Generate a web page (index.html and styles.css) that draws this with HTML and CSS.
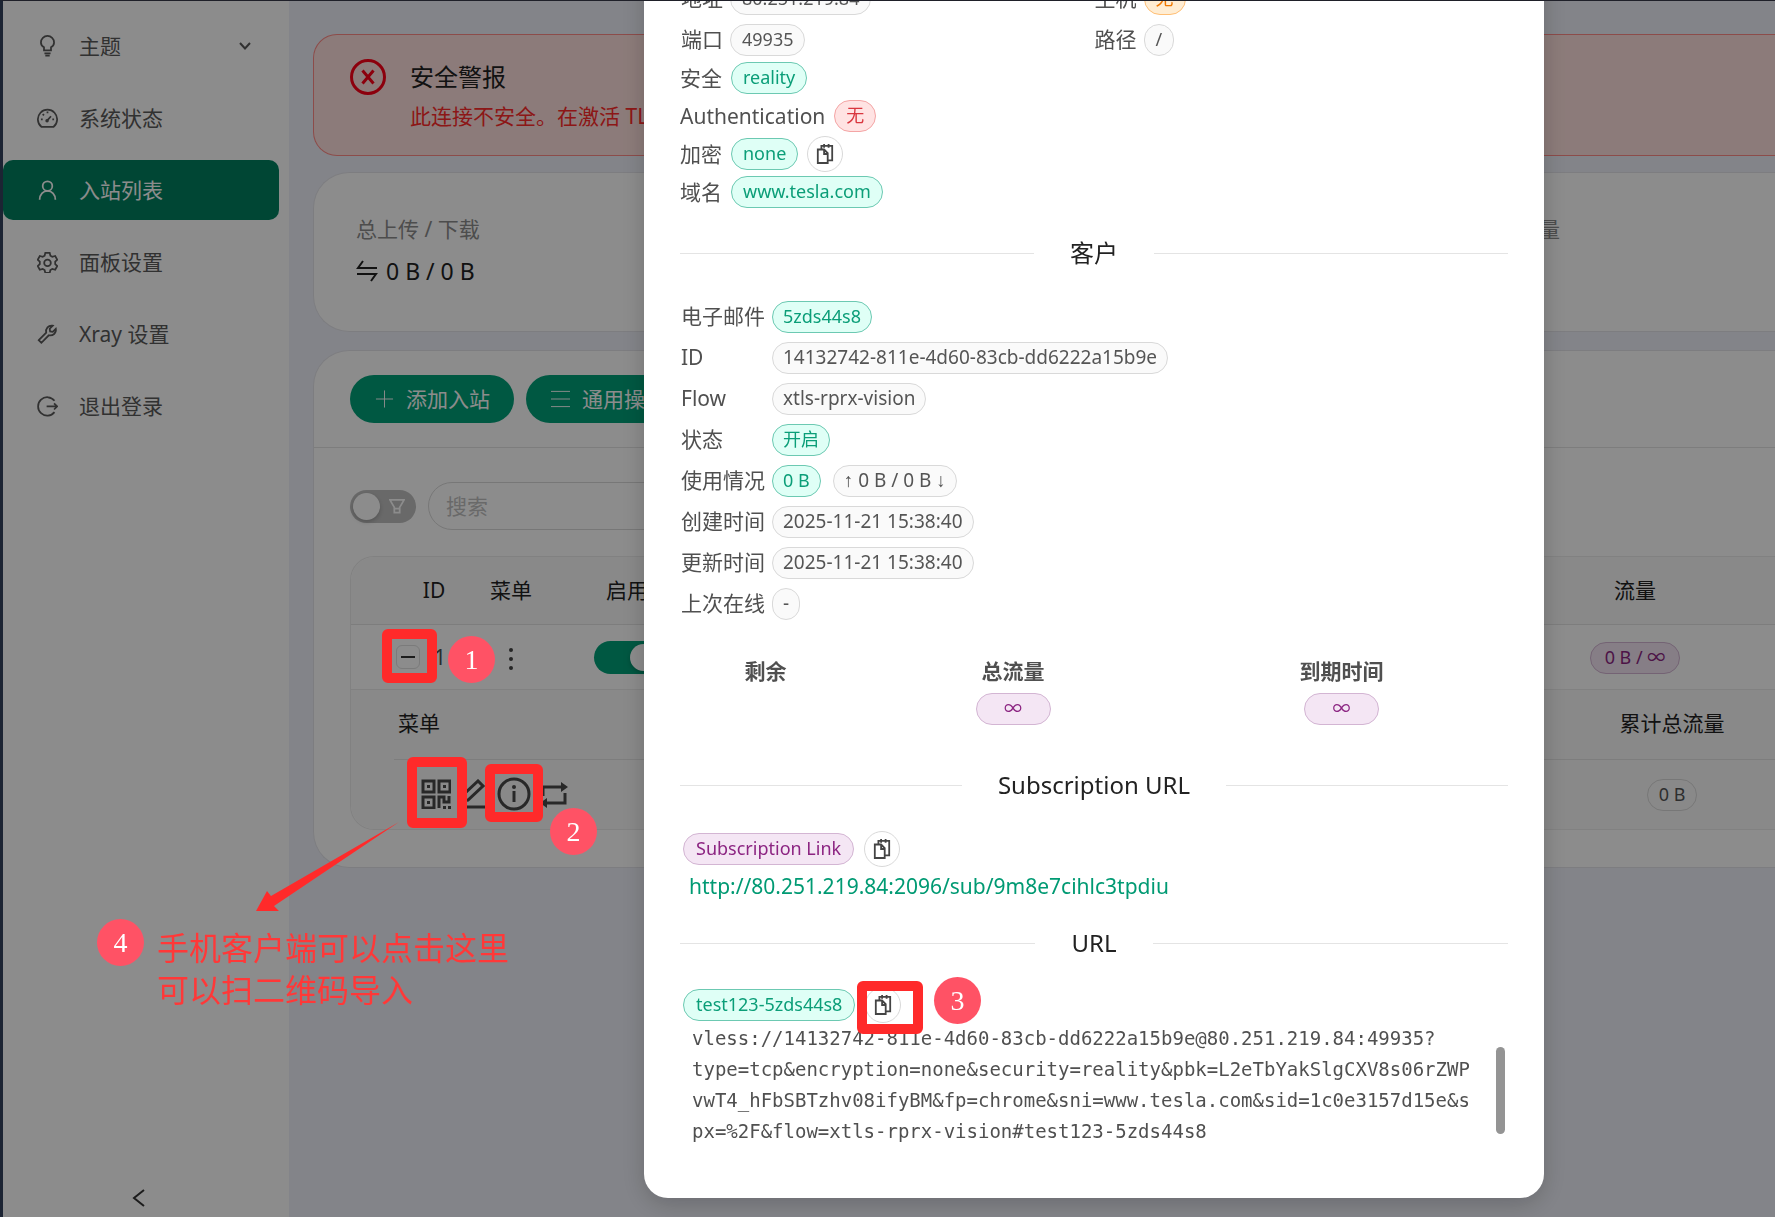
FILE: index.html
```html
<!DOCTYPE html>
<html lang="zh-CN">
  <head>
    <meta charset="utf-8">
    <title>入站列表</title>
    <link rel="stylesheet" href="styles.css">
  </head>
  <body>
    <svg class="defs">
      <symbol id="copy" viewBox="0 0 20 24">
        <path d="M2 7h7l4 4v11H2z M9 7v5h4 M6 7V3h12v16h-5 M9 1v4 M14 1v4"/>
      </symbol>
    </svg>

    <div class="layout">
      <aside class="sider">
        <nav class="menu">
          <a href="#" class="menu-item">
            <svg class="icon" viewBox="0 0 24 24"><path d="M8 17v-3.500C5.500 12 4.500 10 4.500 8a7.500 7.500 0 0 1 15 0c0 2-1 4-3.500 5.500V17z M8.500 20.500h7 M9.500 23h5"/></svg>
            <span>主题</span>
            <svg class="arrow" viewBox="0 0 12 8"><path d="M1 1l5 5.500L11 1"/></svg>
          </a>
          <a href="#" class="menu-item">
            <svg class="icon" viewBox="0 0 24 24"><path d="M5 22a11 11 0 1 1 14 0z M11.500 15L16 10 M12 4.500v2 M4.500 13.500h2 M17.500 13.500h2 M6.500 7.500L8 9"/><circle cx="11.500" cy="15" r="1"/></svg>
            <span>系统状态</span>
          </a>
          <a href="#" class="menu-item active">
            <svg class="icon" viewBox="0 0 24 24"><circle cx="12" cy="7.500" r="5.500"/><path d="M3 23c0-6 4-10 9-10s9 4 9 10"/></svg>
            <span>入站列表</span>
          </a>
          <a href="#" class="menu-item">
            <svg class="icon" viewBox="0 0 24 24"><path d="M9.500 1.500h5l.8 3.300 2.200 1.300 3.300-1 2.400 4.300-2.400 2.300v2.600l2.400 2.300-2.400 4.300-3.300-1-2.200 1.300-.8 3.300h-5l-.8-3.300-2.200-1.300-3.300 1L.8 16.600l2.400-2.300v-2.600L.8 9.400l2.400-4.300 3.300 1 2.200-1.300z"/><circle cx="12" cy="13" r="3.800"/></svg>
            <span>面板设置</span>
          </a>
          <a href="#" class="menu-item">
            <svg class="icon" viewBox="0 0 24 24"><path d="M2 19l8.500-8.500C9.500 6 13 1.500 18 2.500l-3.500 3.500.5 3 3 .5L21.500 6c1 5-3.500 8.500-8 7.500L5 22z"/></svg>
            <span>Xray 设置</span>
          </a>
          <a href="#" class="menu-item">
            <svg class="icon" viewBox="0 0 24 24"><path d="M20 6a10.500 10.500 0 1 0 0 13 M11 12.500h12 M19.500 9l3.500 3.500-3.500 3.500"/></svg>
            <span>退出登录</span>
          </a>
        </nav>
        <button class="trigger" aria-label="收起">
          <svg viewBox="0 0 14 20"><path d="M12 2L2 10l10 8"/></svg>
        </button>
      </aside>

      <main class="content">
        <section class="alert">
          <svg class="alert-icon" viewBox="0 0 36 36"><circle cx="18" cy="18" r="16.500"/><path d="M12.500 11.500l11 13 M23.500 11.500l-11 13"/></svg>
          <div>
            <h2>安全警报</h2>
            <p>此连接不安全。在激活 TLS 进行数据保护之前，请勿输入敏感信息。</p>
          </div>
        </section>

        <section class="card stats">
          <div class="stat">
            <div class="stat-title">总上传 / 下载</div>
            <div class="stat-value">
              <svg viewBox="0 0 22 24"><path d="M7 2L2 9h19 M1 15h19l-5 7"/></svg>
              0 B / 0 B
            </div>
          </div>
          <div class="stat">
            <div class="stat-title">总用量</div>
          </div>
        </section>

        <section class="card">
          <div class="card-head">
            <button class="btn">
              <svg viewBox="0 0 20 20"><path d="M10 1v18 M1 10h18"/></svg>添加入站
            </button>
            <button class="btn">
              <svg viewBox="0 0 20 20"><path d="M0 2h20 M0 10h20 M0 18h20"/></svg>通用操作
            </button>
          </div>
          <div class="card-body">
            <div class="filter">
              <label class="switch">
                <input type="checkbox" aria-label="筛选">
                <svg viewBox="0 0 18 18"><path d="M1 1.500h16L12 10v6H6v-6z M6 11.500h6"/></svg>
              </label>
              <input type="text" class="search" placeholder="搜索" aria-label="搜索">
            </div>

            <table class="inbounds">
              <colgroup>
                <col class="c-gap"><col class="c-id"><col class="c-menu"><col class="c-on"><col><col class="c-traffic"><col class="c-end">
              </colgroup>
              <tr>
                <th></th><th>ID</th><th>菜单</th><th>启用</th><th></th><th>流量</th><th></th>
              </tr>
              <tr class="row">
                <td></td>
                <td>
                  <div class="id-cell"><button class="expand" aria-label="收起行"></button>1</div>
                </td>
                <td><svg class="more" viewBox="0 0 6 24"><circle cx="3" cy="3" r="2"/><circle cx="3" cy="12" r="2"/><circle cx="3" cy="21" r="2"/></svg></td>
                <td><label class="switch on"><input type="checkbox" checked aria-label="启用"></label></td>
                <td></td>
                <td><span class="tag purple total">0 B / ∞</span></td>
                <td></td>
              </tr>
              <tr class="nested">
                <td></td>
                <td colspan="6">
                  <table class="clients">
                    <colgroup><col class="c-ops"><col><col class="c-total"></colgroup>
                    <tr><th>菜单</th><th></th><th>累计总流量</th></tr>
                    <tr>
                      <td>
                        <div class="ops">
                          <svg viewBox="0 0 30 30"><path d="M2 2h11v11H2z M18 2h11v11H18z M2 18h11v11H2z M18 29V18h5v5h5v-6"/><path class="dot" d="M6 6h3v3H6z M22 6h3v3h-3z M6 22h3v3H6z M22 27h3v3h-3z M27 27h3v3h-3z"/></svg>
                          <svg viewBox="0 0 30 30"><path d="M3 22l1-6L19 2l5 5L9 21z M2 28h26"/></svg>
                          <svg class="info" viewBox="0 0 34 34"><circle cx="17" cy="17" r="15"/><path d="M17 14v11"/><circle class="dot" cx="17" cy="10" r="2"/></svg>
                          <svg viewBox="0 0 30 30"><path d="M4 17V8h20 M26 14v10H6"/><path class="dot" d="M22 3l7 5-7 5z M8 19l-7 5 7 5z"/></svg>
                        </div>
                      </td>
                      <td></td>
                      <td><span class="tag">0 B</span></td>
                    </tr>
                  </table>
                </td>
              </tr>
            </table>
          </div>
        </section>
      </main>
    </div>

    <div class="mask">
      <div class="modal">
        <div class="info-cols">
          <table class="pairs">
            <tr><td>地址</td><td><span class="tag">80.251.219.84</span></td></tr>
            <tr><td>端口</td><td><span class="tag">49935</span></td></tr>
          </table>
          <table class="pairs">
            <tr><td>主机</td><td><span class="tag orange">无</span></td></tr>
            <tr><td>路径</td><td><span class="tag">/</span></td></tr>
          </table>
        </div>
        <ul class="security">
          <li>安全 <span class="tag green">reality</span></li>
          <li>Authentication <span class="tag red">无</span></li>
          <li>加密 <span class="tag green">none</span><button class="copy" aria-label="复制"><svg><use href="#copy"/></svg></button></li>
          <li>域名 <span class="tag green">www.tesla.com</span></li>
        </ul>

        <h3 class="divider">客户</h3>
        <table class="client">
          <tr><td>电子邮件</td><td><span class="tag green">5zds44s8</span></td></tr>
          <tr><td>ID</td><td><span class="tag">14132742-811e-4d60-83cb-dd6222a15b9e</span></td></tr>
          <tr><td>Flow</td><td><span class="tag">xtls-rprx-vision</span></td></tr>
          <tr><td>状态</td><td><span class="tag green">开启</span></td></tr>
          <tr><td>使用情况</td><td><span class="tag green">0 B</span><span class="tag usage"><i>↑</i> 0 B / 0 B <i>↓</i></span></td></tr>
          <tr><td>创建时间</td><td><span class="tag">2025-11-21 15:38:40</span></td></tr>
          <tr><td>更新时间</td><td><span class="tag">2025-11-21 15:38:40</span></td></tr>
          <tr><td>上次在线</td><td><span class="tag">-</span></td></tr>
        </table>
        <table class="quota">
          <colgroup><col class="c-left"><col class="c-sum"><col></colgroup>
          <tr><th>剩余</th><th>总流量</th><th>到期时间</th></tr>
          <tr><td></td><td><span class="tag purple wide">∞</span></td><td><span class="tag purple wide">∞</span></td></tr>
        </table>

        <h3 class="divider">Subscription URL</h3>
        <div class="link-head">
          <span class="tag purple">Subscription Link</span>
          <button class="copy" aria-label="复制"><svg><use href="#copy"/></svg></button>
        </div>
        <a class="sub-link" href="#">http://80.251.219.84:2096/sub/9m8e7cihlc3tpdiu</a>

        <h3 class="divider">URL</h3>
        <div class="link-head">
          <span class="tag green">test123-5zds44s8</span>
          <button class="copy" aria-label="复制"><svg><use href="#copy"/></svg></button>
        </div>
        <div class="code-box">
          <code>vless://14132742-811e-4d60-83cb-dd6222a15b9e@80.251.219.84:49935?<br>type=tcp&amp;encryption=none&amp;security=reality&amp;pbk=L2eTbYakSlgCXV8s06rZWP<br>vwT4_hFbSBTzhv08ifyBM&amp;fp=chrome&amp;sni=www.tesla.com&amp;sid=1c0e3157d15e&amp;s<br>px=%2F&amp;flow=xtls-rprx-vision#test123-5zds44s8</code>
          <span class="thumb"></span>
        </div>
      </div>
    </div>

    <!-- tutorial marks -->
    <div class="marks">
      <div class="box box-expand"></div>
      <div class="box box-qr"></div>
      <div class="box box-info"></div>
      <div class="box box-copy"></div>
      <div class="num num-1">1</div>
      <div class="num num-2">2</div>
      <div class="num num-3">3</div>
      <div class="num num-4">4</div>
      <svg class="pointer" viewBox="0 0 143 90"><path d="M0 89L11 69l4 5L143 0 18 84l5 5z"/></svg>
      <p class="note">手机客户端可以点击这里<br>可以扫二维码导入</p>
    </div>
  </body>
</html>
```
FILE: styles.css
```css
* { box-sizing: border-box; }
body {
  margin: 0;
  height: 100vh;
  overflow: hidden;
  background: #eff1fa;
  color: #505050;
  font: 21px/32px "Noto Sans", "Noto Sans CJK SC", sans-serif;
}
/* dark edge of the browser window */
body::before {
  content: "";
  position: fixed;
  inset: 0;
  border-top: 1px solid #1f2029;
  border-left: 3px solid #1c2433;
  z-index: 10;
  pointer-events: none;
}
h2, h3, p, ul { margin: 0; padding: 0; font-weight: normal; }
svg { fill: none; stroke: currentColor; stroke-width: 2; flex: none; }
button { font: inherit; cursor: pointer; }
table { border-collapse: collapse; }
td, th { padding: 0; font-weight: normal; }
.defs { position: absolute; width: 0; height: 0; }
.dot { fill: currentColor; stroke: none; }

.layout { display: flex; height: 100%; padding-left: 3px; }
.sider {
  flex: none;
  display: flex;
  flex-direction: column;
  width: 286px;
  background: #fff;
}
.menu {
  flex: 1;
  display: flex;
  flex-direction: column;
  gap: 12px;
  padding: 16px 10px 0 0;
}
.menu-item {
  display: flex;
  align-items: center;
  height: 60px;
  padding: 0 28px 0 34px;
  border-radius: 10px;
  color: #595959;
  text-decoration: none;
}
.menu-item .icon { width: 21px; height: 22px; margin-right: 21px; }
.menu-item .arrow { width: 12px; height: 8px; margin-left: auto; }
.menu-item.active { background: #008060; color: #fff; }
.trigger {
  height: 34px;
  padding: 0 14px 0 0;
  border: 0;
  background: none;
  color: #333;
}
.trigger svg { width: 14px; height: 20px; }

.content { flex: 1; min-width: 0; padding: 34px 0 0 24px; }
.alert {
  display: flex;
  gap: 24px;
  height: 122px;
  padding: 24px 0 0 36px;
  border: 1px solid #ff8a87;
  border-right: 0;
  border-radius: 24px 0 0 24px;
  background: #ffe1de;
  white-space: nowrap;
  overflow: hidden;
}
.alert-icon { width: 36px; height: 36px; color: #ff0018; stroke-width: 3; }
.alert h2 { color: #222; font-size: 24px; line-height: 36px; }
.alert p { color: #ff2a2a; line-height: 42px; }
.card {
  border: 1px solid #e4e4ea;
  border-right: 0;
  border-radius: 36px 0 0 36px;
  background: #fff;
}
.stats { display: flex; height: 160px; margin: 16px 0 18px; padding: 40px 0 0 42px; }
.stat { flex: none; width: 1141px; }
.stat:last-child { flex: 1; width: auto; min-width: 0; }
.stat-title { color: #8c8c8c; }
.stat-value {
  display: flex;
  align-items: center;
  gap: 8px;
  padding-top: 8px;
  color: #222;
  font-size: 23px;
  line-height: 36px;
}
.stat-value svg { width: 22px; height: 24px; }
.card-head { display: flex; gap: 12px; padding: 24px 36px; border-bottom: 1px solid #e4e4e4; }
.btn {
  display: flex;
  align-items: center;
  gap: 12px;
  height: 48px;
  padding: 0 24px 0 25px;
  border: 0;
  border-radius: 24px;
  background: #00a078;
  color: #fff;
  white-space: nowrap;
}
.btn svg { width: 19px; height: 20px; stroke-width: 1; }
.card-body { padding: 34px 0 37px 36px; }
.filter { display: flex; align-items: center; gap: 12px; margin-bottom: 26px; }
.switch {
  display: inline-flex;
  align-items: center;
  justify-content: space-between;
  width: 66px;
  height: 33px;
  padding: 0 11px 0 3px;
  border-radius: 17px;
  background: #bfbfbf;
  vertical-align: middle;
}
.switch input {
  appearance: none;
  width: 27px;
  height: 27px;
  margin: 0;
  border-radius: 50%;
  background: #fff;
  box-shadow: 0 2px 4px rgba(0, 0, 0, .2);
}
.switch svg { width: 16px; height: 17px; color: #fff; }
.switch.on { justify-content: flex-end; padding: 0 3px; background: #00a078; }
.search {
  width: 420px;
  height: 48px;
  padding: 0 17px;
  border: 1px solid #d9d9d9;
  border-radius: 24px;
  background: none;
  font: inherit;
}
.search::placeholder { color: #bfbfbf; }

.inbounds {
  width: 100%;
  table-layout: fixed;
  border-collapse: separate;
  border-spacing: 0;
  border: 1px solid #ececec;
  border-right: 0;
  border-radius: 24px 0 0 24px;
  text-align: center;
}
.inbounds th {
  height: 68px;
  padding-bottom: 2px;
  border-bottom: 1px solid #e4e4e4;
  background: #fafafa;
  color: #222;
  white-space: nowrap;
}
.inbounds > tbody > tr:first-child th:first-child { border-top-left-radius: 24px; }
.row > td { height: 65px; border-bottom: 1px solid #ececec; }
.nested > td { background: #fafafa; }
.nested > td:first-child { border-bottom-left-radius: 24px; }
.c-gap { width: 43px; }
.c-id { width: 80px; }
.c-menu { width: 74px; }
.c-on { width: 158px; }
.c-traffic { width: 170px; }
.c-end { width: 55px; }
.id-cell { display: flex; align-items: center; gap: 14px; padding-left: 2px; }
.expand {
  display: flex;
  align-items: center;
  justify-content: center;
  width: 24px;
  height: 24px;
  padding: 0;
  border: 1px solid #e0e0e0;
  border-radius: 6px;
  background: #fff;
}
.expand::before { content: ""; width: 14px; height: 2px; background: #333; }
.more { width: 6px; height: 24px; fill: #444; stroke: none; vertical-align: middle; }
.clients { width: 100%; table-layout: fixed; }
.clients th { height: 69px; }
.clients th:first-child { padding-left: 4px; text-align: left; }
.clients td { height: 70px; }
.c-ops { width: 200px; }
.c-total { width: 206px; }
.ops { display: flex; align-items: center; gap: 8px; padding-left: 27px; color: #4a4a4a; }
.ops svg { width: 30px; height: 30px; stroke-width: 3; }
.ops .info { width: 34px; height: 34px; }

.tag {
  display: inline-block;
  height: 32px;
  padding: 0 11px;
  border: 1px solid #d9d9d9;
  border-radius: 16px;
  background: #fafafa;
  color: #555;
  font-size: 18px;
  line-height: 29px;
  text-align: center;
  vertical-align: middle;
  white-space: nowrap;
}
.tag.green { border-color: #6cc9b2; background: #dffff6; color: #0b9e78; }
.tag.red { border-color: #f4a5a5; background: #ffe3e3; color: #d9363e; }
.tag.orange { border-color: #ffbf75; background: #ffedd3; color: #f07800; }
.tag.purple { border-color: #d3b5d3; background: #f4e6f4; color: #8c2582; }
.tag.wide { width: 75px; }
.tag.total { width: 90px; }

.mask { position: fixed; inset: 0; background: rgba(0, 0, 0, .45); }
.modal {
  width: 900px;
  margin: -59px 0 0 644px;
  padding: 36px 36px 51px;
  border-radius: 24px;
  background: #fff;
  box-shadow: 0 6px 24px rgba(0, 0, 0, .2);
}
.info-cols { display: grid; grid-template-columns: 1fr 1fr; padding-left: 1px; }
.pairs td { height: 41px; }
.pairs td:first-child { width: 49px; }
.security { list-style: none; }
.security li { display: flex; align-items: center; gap: 9px; height: 38px; }
.copy {
  display: inline-flex;
  align-items: center;
  justify-content: center;
  width: 36px;
  height: 36px;
  padding: 0;
  border: 1px solid #d9d9d9;
  border-radius: 50%;
  background: #fff;
  color: #444;
}
.copy svg { width: 18px; height: 22px; }
.divider {
  display: flex;
  align-items: center;
  gap: 36px;
  color: #222;
  font-size: 24px;
  line-height: 36px;
}
.divider::before, .divider::after { content: ""; flex: 1; height: 1px; background: #e4e4e4; }
.security + .divider { margin: 24px 0; }
.quota + .divider { margin: 38px 0 28px; }
.sub-link + .divider { margin: 20px 0 26px; }
.client { margin-left: 1px; }
.client td { height: 41px; }
.client td:first-child { width: 91px; }
.client .tag { padding: 0 10px; font-size: 19px; }
.client .tag.green { font-size: 18px; }
.client .usage { margin-left: 12px; }
.usage i { font-family: "Liberation Sans", sans-serif; font-style: normal; }
.quota { width: 100%; margin-top: 32px; table-layout: fixed; text-align: center; }
.quota th { height: 32px; font-weight: bold; }
.quota td { height: 42px; }
.c-left { width: 171px; }
.c-sum { width: 324px; }
.link-head { display: flex; align-items: center; gap: 10px; padding-left: 3px; }
.link-head .tag { padding: 0 12px; }
.sub-link {
  display: block;
  padding-left: 9px;
  color: #009a73;
  line-height: 38px;
  text-decoration: none;
}
.code-box { display: flex; justify-content: space-between; padding: 0 3px 0 12px; }
.code-box code { font: 19px/31px "DejaVu Sans Mono", monospace; white-space: nowrap; }
.thumb { width: 9px; height: 87px; margin-top: 24px; border-radius: 5px; background: #949494; }

/* marks drawn over the page */
.marks { position: fixed; inset: 0; pointer-events: none; }
.marks > * { position: absolute; }
.box { border: 10px solid #ff2a2a; border-radius: 6px; }
.box-expand { left: 382px; top: 629px; width: 55px; height: 54px; }
.box-qr { left: 407px; top: 757px; width: 60px; height: 71px; }
.box-info { left: 485px; top: 764px; width: 58px; height: 58px; }
.box-copy { left: 857px; top: 981px; width: 66px; height: 53px; }
.num {
  width: 47px;
  height: 47px;
  border-radius: 50%;
  background: #ff5265;
  color: #fff;
  font: 28px/47px "Liberation Serif", serif;
  text-align: center;
}
.num-1 { left: 448px; top: 636px; }
.num-2 { left: 550px; top: 808px; }
.num-3 { left: 934px; top: 977px; }
.num-4 { left: 97px; top: 919px; }
.pointer { left: 256px; top: 822px; width: 143px; height: 90px; fill: #ff2a2a; stroke: none; }
.note { left: 157px; top: 927px; color: #ff3838; font-size: 32px; line-height: 42px; white-space: nowrap; }
```
